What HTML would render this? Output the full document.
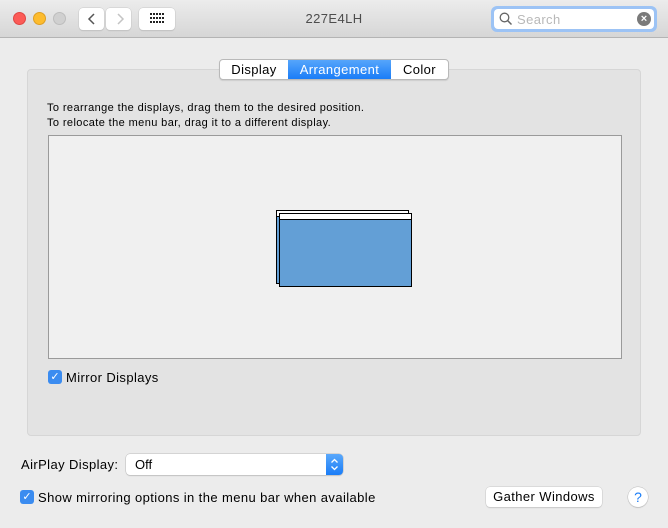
<!DOCTYPE html>
<html><head><meta charset="utf-8"><style>
*{box-sizing:border-box;margin:0;padding:0}
body{width:668px;height:528px;background:#ececec;font-family:"Liberation Sans",sans-serif;position:relative;overflow:hidden;color:#000}
.abs{position:absolute;white-space:nowrap}
.ls{letter-spacing:0.4px}
.tb{left:0;top:0;width:668px;height:38px;background:linear-gradient(#ececec,#d6d6d6);border-bottom:1px solid #b4b4b4}
.dot{width:13px;height:13px;border-radius:50%;top:12px}
.btn{background:#fff;border-radius:4px;box-shadow:0 0 0 0.5px #c8c8c8,0 1px 1px rgba(0,0,0,.15)}
.group{left:27px;top:69px;width:614px;height:367px;background:#e3e3e3;border:1px solid #d6d6d6;border-radius:4px}
.tabs{top:59px;left:219px;height:21px;display:flex;border:1px solid #b9b9b9;border-radius:4px;overflow:hidden;background:#fff;font-size:13px;box-shadow:0 1px 1px rgba(0,0,0,.1)}
.tabs div{line-height:19px;text-align:center}
.chk{width:14px;height:14px;background:#3b8cf0;border-radius:3px;color:#fff;font-size:11px;line-height:14px;text-align:center}
</style></head><body>
<div class="abs tb"></div>
<div class="abs dot" style="left:13px;background:#fc5b57;border:1px solid #df4744"></div>
<div class="abs dot" style="left:33px;background:#fdbc2e;border:1px solid #de9f24"></div>
<div class="abs dot" style="left:53px;background:#d0d0d0;border:1px solid #bdbdbd"></div>
<div class="abs btn" style="left:79px;top:8px;width:25px;height:22px"></div>
<div class="abs btn" style="left:106px;top:8px;width:25px;height:22px"></div>
<svg class="abs" style="left:79px;top:8px" width="52" height="22"><path d="M15 6 L10 11 L15 16" stroke="#555" stroke-width="1.5" fill="none"/><path d="M39 6 L44 11 L39 16" stroke="#c4c4c4" stroke-width="1.5" fill="none"/></svg>
<div class="abs btn" style="left:139px;top:8px;width:36px;height:22px"></div>
<svg class="abs" style="left:150px;top:13px" width="14" height="12"><g fill="#222">
<rect x="0" y="0" width="2" height="2"/><rect x="3" y="0" width="2" height="2"/><rect x="6" y="0" width="2" height="2"/><rect x="9" y="0" width="2" height="2"/><rect x="12" y="0" width="2" height="2"/>
<rect x="0" y="4" width="2" height="2"/><rect x="3" y="4" width="2" height="2"/><rect x="6" y="4" width="2" height="2"/><rect x="9" y="4" width="2" height="2"/><rect x="12" y="4" width="2" height="2"/>
<rect x="0" y="8" width="2" height="2"/><rect x="3" y="8" width="2" height="2"/><rect x="6" y="8" width="2" height="2"/><rect x="9" y="8" width="2" height="2"/><rect x="12" y="8" width="2" height="2"/></g></svg>
<div class="abs ls" style="left:0;width:668px;top:11px;text-align:center;font-size:13px;color:#4d4d4d">227E4LH</div>
<div class="abs" style="left:491px;top:6px;width:166px;height:26px;border-radius:6px;background:#9cc3f5"></div>
<div class="abs" style="left:494px;top:9px;width:160px;height:20px;border-radius:4px;background:#fff"></div>
<svg class="abs" style="left:499px;top:12px" width="14" height="14"><circle cx="5.5" cy="5.5" r="4.3" stroke="#666" stroke-width="1.3" fill="none"/><path d="M8.7 8.7 L12.5 12.5" stroke="#666" stroke-width="1.5"/></svg>
<div class="abs ls" style="left:517px;top:12px;font-size:13px;color:#b8b8b8">Search</div>
<div class="abs" style="left:637px;top:12px;width:14px;height:14px;border-radius:50%;background:#7a7a7a;color:#fff;font-size:11px;line-height:14px;text-align:center;font-weight:bold">×</div>

<div class="abs group"></div>
<div class="abs tabs ls"><div style="width:68px">Display</div><div style="width:103px;background:linear-gradient(#56a5fb,#1a7df7);color:#fff">Arrangement</div><div style="width:57px">Color</div></div>
<div class="abs ls" style="left:47px;top:101px;font-size:11px;line-height:15px">To rearrange the displays, drag them to the desired position.<br>To relocate the menu bar, drag it to a different display.</div>
<div class="abs" style="left:48px;top:135px;width:574px;height:224px;background:#f0f0f0;border:1px solid #9a9a9a"></div>
<div class="abs" style="left:276px;top:210px;width:133px;height:74px;background:#639fd6;border:1px solid #000"></div>
<div class="abs" style="left:276px;top:210px;width:133px;height:7px;background:#fff;border:1px solid #000"></div>
<div class="abs" style="left:279px;top:213px;width:133px;height:74px;background:#639fd6;border:1px solid #000"></div>
<div class="abs" style="left:279px;top:213px;width:133px;height:7px;background:#fff;border:1px solid #000"></div>
<div class="abs chk" style="left:48px;top:370px">✓</div>
<div class="abs ls" style="left:66px;top:370px;font-size:13px">Mirror Displays</div>

<div class="abs ls" style="left:21px;top:457px;font-size:13px">AirPlay Display:</div>
<div class="abs" style="left:126px;top:454px;width:217px;height:21px;background:#fff;border-radius:4px;box-shadow:0 0 0 0.5px #bbb,0 1px 1px rgba(0,0,0,.15)"></div>
<div class="abs" style="left:135px;top:457px;font-size:13px">Off</div>
<div class="abs" style="left:326px;top:454px;width:17px;height:21px;background:linear-gradient(#5aa8fb,#1a7df7);border-radius:0 4px 4px 0"></div>
<svg class="abs" style="left:326px;top:454px" width="17" height="21"><path d="M5.5 8.5 L8.5 5.5 L11.5 8.5 M5.5 12.5 L8.5 15.5 L11.5 12.5" stroke="#fff" stroke-width="1.3" fill="none"/></svg>
<div class="abs chk" style="left:20px;top:490px">✓</div>
<div class="abs ls" style="left:38px;top:490px;font-size:13px">Show mirroring options in the menu bar when available</div>
<div class="abs btn ls" style="left:486px;top:487px;width:116px;height:20px;font-size:13px;text-align:center;line-height:20px">Gather Windows</div>
<div class="abs" style="left:628px;top:487px;width:20px;height:20px;border-radius:50%;background:#fff;box-shadow:0 0 0 0.5px #bbb,0 1px 1px rgba(0,0,0,.15);color:#1a7df7;font-size:14px;text-align:center;line-height:20px">?</div>
</body></html>
